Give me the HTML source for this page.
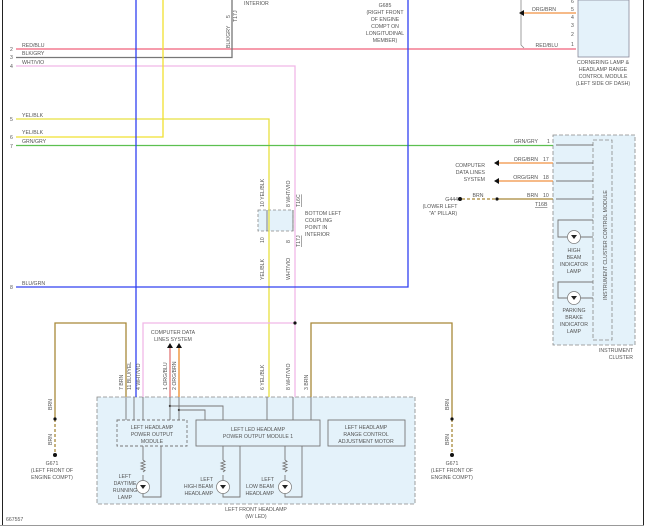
<!DOCTYPE html>
<html><head><meta charset="utf-8"><style>
html,body{margin:0;padding:0;background:#fff;}
svg{display:block;}
text{font-family:"Liberation Sans",sans-serif;font-size:5.2px;fill:#555;}
.m{text-anchor:middle}.e{text-anchor:end}
</style></head><body>
<svg width="650" height="527" viewBox="0 0 650 527" xmlns="http://www.w3.org/2000/svg">
<rect x="0" y="0" width="650" height="527" fill="#fff"/>
<line x1="2.5" y1="0" x2="2.5" y2="526" stroke="#222" stroke-width="1"/>
<line x1="643.5" y1="0" x2="643.5" y2="526" stroke="#222" stroke-width="1"/>
<line x1="0" y1="525.5" x2="644" y2="525.5" stroke="#999" stroke-width="1"/>

<rect x="578" y="0" width="51" height="57" fill="#e4f2fa" stroke="#889" stroke-width="0.8"/>
<rect x="553" y="135" width="82" height="210" fill="#e4f2fa" stroke="#888" stroke-width="0.8" stroke-dasharray="4,2"/>
<rect x="593" y="140" width="19" height="200" fill="none" stroke="#888" stroke-width="0.8" stroke-dasharray="4,2"/>
<rect x="97" y="397" width="318" height="107" fill="#e4f2fa" stroke="#888" stroke-width="0.8" stroke-dasharray="4,2"/>
<rect x="258" y="210" width="35" height="21" fill="#e4f2fa" stroke="#888" stroke-width="0.8" stroke-dasharray="3,2"/>

<g fill="none" stroke-width="1.3">
<path d="M16 49H576" stroke="#f0607a"/>
<path d="M16 57.5H232V0" stroke="#777"/>
<path d="M16 66H295V397" stroke="#f0b8e8"/>
<path d="M16 119H269V397" stroke="#e8e040"/>
<path d="M16 137H163V0" stroke="#f0e030"/>
<path d="M16 145.5H553" stroke="#5cc050"/>
<path d="M136 0V397" stroke="#3040f0"/>
<path d="M16 287H408V0" stroke="#3040f0"/>
<path d="M295 323H143V397" stroke="#f0b8e8"/>
<path d="M126 397V323H55V419" stroke="#a88838"/>
<path d="M55 419V452" stroke="#a88838" stroke-dasharray="3,2"/>
<path d="M311 397V323H452V419" stroke="#a88838"/>
<path d="M452 419V452" stroke="#a88838" stroke-dasharray="3,2"/>
<path d="M170 397V348" stroke="#e89090" stroke-width="1.6"/>
<path d="M179 397V348" stroke="#f0a050" stroke-width="1.6"/>
<path d="M520 13H576" stroke="#f09040"/>
<path d="M496 163H553M496 181H553" stroke="#f09040"/>
<path d="M497 199H553" stroke="#a88838"/>
<path d="M462 199H497" stroke="#a88838" stroke-dasharray="3,2"/>
<path d="M521 0V45l3 3" stroke="#888" stroke-width="0.8"/>
</g>
<g fill="#111">
<path d="M519 13l5-3v6z"/>
<path d="M494 163l5-3v6z"/><path d="M494 181l5-3v6z"/>
<path d="M170 343l-3 5h6z"/><path d="M179 343l-3 5h6z"/>
<circle cx="295" cy="323" r="1.6"/><circle cx="55" cy="419" r="1.6"/><circle cx="452" cy="419" r="1.6"/>
<circle cx="497" cy="199" r="1.6"/><circle cx="170" cy="406" r="1.2"/><circle cx="179" cy="410" r="1.2"/>
<circle cx="55" cy="455" r="2"/><circle cx="452" cy="455" r="2"/><circle cx="460" cy="199" r="2"/>
</g>
<g fill="none" stroke="#777" stroke-width="0.9">
<path d="M556 145H593M556 163H593M556 181H593M556 199H593"/>
<path d="M593 220H558V237H593M593 282H558V298H593"/>
<path d="M126 397V420M134 397V420M143 397V420M170 397V420M179 397V420M267 397V420M293 397V420M311 397V420"/>
<path d="M170 406H223V420M179 410H205V420"/>
<path d="M143 446V460M143 475V488V497H161V446"/>
<path d="M223 446V460M223 475V497H240V446"/>
<path d="M285 446V460M285 475V497H302V446"/>
<path d="M143 460l2 1.5-4 1.5 4 1.5-4 1.5 4 1.5-4 1.5 4 1.5-2 1.5"/>
<path d="M223 460l2 1.5-4 1.5 4 1.5-4 1.5 4 1.5-4 1.5 4 1.5-2 1.5"/>
<path d="M285 460l2 1.5-4 1.5 4 1.5-4 1.5 4 1.5-4 1.5 4 1.5-2 1.5"/>
<path d="M267 210V231M293 210V231"/>
</g>
<rect x="117" y="420" width="70" height="26" fill="none" stroke="#777" stroke-width="0.9" stroke-dasharray="3,2"/>
<rect x="196" y="420" width="124" height="26" fill="#e4f2fa" stroke="#777" stroke-width="0.9"/>
<rect x="328" y="420" width="77" height="26" fill="#e4f2fa" stroke="#777" stroke-width="0.9"/>
<g fill="#fff" stroke="#777" stroke-width="0.7">
<circle cx="143" cy="487" r="6.5"/><circle cx="223" cy="487" r="6.5"/><circle cx="285" cy="487" r="6.5"/>
<circle cx="574" cy="237" r="6.5"/><circle cx="574" cy="298" r="6.5"/>
</g>
<g fill="#222"><path d="M140 485h6l-3 4z"/><path d="M220 485h6l-3 4z"/><path d="M282 485h6l-3 4z"/><path d="M571 235h6l-3 4z"/><path d="M571 296h6l-3 4z"/></g>

<g>
<text x="10" y="51">2</text><text x="22" y="47">RED/BLU</text>
<text x="10" y="59">3</text><text x="22" y="55">BLK/GRY</text>
<text x="10" y="68">4</text><text x="22" y="64">WHT/VIO</text>
<text x="10" y="121">5</text><text x="22" y="117">YEL/BLK</text>
<text x="10" y="139">6</text><text x="22" y="134">YEL/BLK</text>
<text x="10" y="148">7</text><text x="22" y="143">GRN/GRY</text>
<text x="10" y="289">8</text><text x="22" y="285">BLU/GRN</text>
<text x="244" y="5">INTERIOR</text>
<text class="m" x="385" y="7">G685</text><text class="m" x="385" y="14">(RIGHT FRONT</text><text class="m" x="385" y="21">OF ENGINE</text><text class="m" x="385" y="28">COMPT ON</text><text class="m" x="385" y="35">LONGITUDINAL</text><text class="m" x="385" y="42">MEMBER)</text>
<text class="e" x="558" y="47">RED/BLU</text><text class="e" x="556" y="11">ORG/BRN</text>
<text x="571" y="3">6</text><text x="571" y="11">5</text><text x="571" y="19">4</text><text x="571" y="27">3</text><text x="571" y="36">2</text><text x="571" y="46">1</text>
<text class="m" x="603" y="64">CORNERING LAMP &amp;</text><text class="m" x="603" y="71">HEADLAMP RANGE</text><text class="m" x="603" y="78">CONTROL MODULE</text><text class="m" x="603" y="85">(LEFT SIDE OF DASH)</text>
<text class="e" x="538" y="143">GRN/GRY</text><text x="547" y="143">1</text>
<text class="e" x="538" y="161">ORG/BRN</text><text x="543" y="161">17</text>
<text class="e" x="538" y="179">ORG/GRN</text><text x="543" y="179">18</text>
<text class="e" x="538" y="197">BRN</text><text x="543" y="197">10</text>
<text class="m" x="478" y="197">BRN</text>
<text x="535" y="206" text-decoration="underline">T16B</text>
<text class="e" x="485" y="167">COMPUTER</text><text class="e" x="485" y="174">DATA LINES</text><text class="e" x="485" y="181">SYSTEM</text>
<text class="e" x="458" y="201">G444</text><text class="m" x="440" y="208">(LOWER LEFT</text><text class="m" x="443" y="215">"A" PILLAR)</text>
<text class="m" x="574" y="252">HIGH</text><text class="m" x="574" y="259">BEAM</text><text class="m" x="574" y="266">INDICATOR</text><text class="m" x="574" y="273">LAMP</text>
<text class="m" x="574" y="312">PARKING</text><text class="m" x="574" y="319">BRAKE</text><text class="m" x="574" y="326">INDICATOR</text><text class="m" x="574" y="333">LAMP</text>
<text class="e" x="633" y="352">INSTRUMENT</text><text class="e" x="633" y="359">CLUSTER</text>
<text transform="translate(607 300) rotate(-90)">INSTRUMENT CLUSTER CONTROL MODULE</text>
<text x="305" y="215">BOTTOM LEFT</text><text x="305" y="222">COUPLING</text><text x="305" y="229">POINT IN</text><text x="305" y="236">INTERIOR</text>
<text transform="translate(264 207) rotate(-90)">10  YEL/BLK</text>
<text transform="translate(290 207) rotate(-90)">8  WHT/VIO</text>
<text transform="translate(300 207) rotate(-90)" text-decoration="underline">T16C</text>
<text transform="translate(264 280) rotate(-90)">YEL/BLK</text><text transform="translate(264 243) rotate(-90)">10</text>
<text transform="translate(290 280) rotate(-90)">WHT/VIO</text><text transform="translate(290 243) rotate(-90)">8</text>
<text transform="translate(300 247) rotate(-90)" text-decoration="underline">T17J</text>
<text transform="translate(230 48) rotate(-90)">BLK/GRY</text>
<text transform="translate(230 18) rotate(-90)">5</text><text transform="translate(237 22) rotate(-90)">T17J</text>
<text transform="translate(52 410) rotate(-90)">BRN</text><text transform="translate(52 445) rotate(-90)">BRN</text>
<text transform="translate(449 410) rotate(-90)">BRN</text><text transform="translate(449 445) rotate(-90)">BRN</text>
<text class="m" x="52" y="465">G671</text><text class="m" x="52" y="472">(LEFT FRONT OF</text><text class="m" x="52" y="479">ENGINE COMPT)</text>
<text class="m" x="452" y="465">G671</text><text class="m" x="452" y="472">(LEFT FRONT OF</text><text class="m" x="452" y="479">ENGINE COMPT)</text>
<text class="m" x="173" y="334">COMPUTER DATA</text><text class="m" x="173" y="341">LINES SYSTEM</text>
<text transform="translate(123 390) rotate(-90)">7  BRN</text>
<text transform="translate(131 390) rotate(-90)">11  BLU/YEL</text>
<text transform="translate(140 390) rotate(-90)">4  WHT/VIO</text>
<text transform="translate(167 390) rotate(-90)">1  ORG/BLU</text>
<text transform="translate(176 390) rotate(-90)">2  ORG/BRN</text>
<text transform="translate(264 390) rotate(-90)">6  YEL/BLK</text>
<text transform="translate(290 390) rotate(-90)">8  WHT/VIO</text>
<text transform="translate(308 390) rotate(-90)">3  BRN</text>
<text class="m" x="152" y="429">LEFT HEADLAMP</text><text class="m" x="152" y="436">POWER OUTPUT</text><text class="m" x="152" y="443">MODULE</text>
<text class="m" x="258" y="431">LEFT LED HEADLAMP</text><text class="m" x="258" y="438">POWER OUTPUT MODULE 1</text>
<text class="m" x="366" y="429">LEFT HEADLAMP</text><text class="m" x="366" y="436">RANGE CONTROL</text><text class="m" x="366" y="443">ADJUSTMENT MOTOR</text>
<text class="m" x="125" y="478">LEFT</text><text class="m" x="125" y="485">DAYTIME</text><text class="m" x="125" y="492">RUNNING</text><text class="m" x="125" y="499">LAMP</text>
<text class="e" x="213" y="481">LEFT</text><text class="e" x="213" y="488">HIGH BEAM</text><text class="e" x="213" y="495">HEADLAMP</text>
<text class="e" x="274" y="481">LEFT</text><text class="e" x="274" y="488">LOW BEAM</text><text class="e" x="274" y="495">HEADLAMP</text>
<text class="m" x="256" y="511">LEFT FRONT HEADLAMP</text><text class="m" x="256" y="518">(W/ LED)</text>
<text x="6" y="521">667557</text>
</g>
</svg>
</body></html>
